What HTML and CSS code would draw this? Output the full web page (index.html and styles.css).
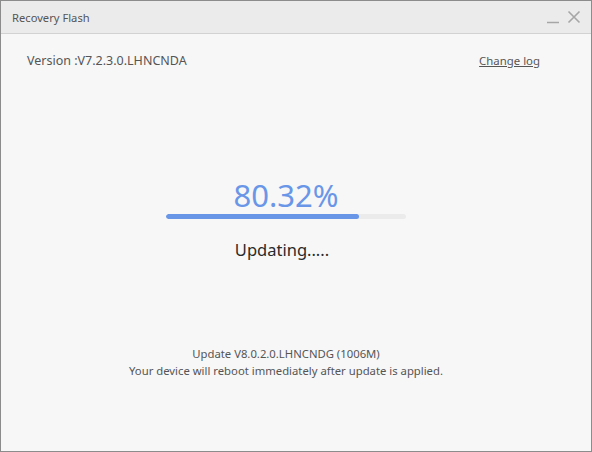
FILE: index.html
```html
<!DOCTYPE html>
<html>
<head>
<meta charset="utf-8">
<link rel="stylesheet" href="styles.css">
</head>
<body>
<div class="window">
  <div class="titlebar">
    <span class="title">Recovery Flash</span>
    <div class="controls">
      <svg class="ctl" width="14" height="14" viewBox="0 0 14 14"><path d="M1 12.5H13" stroke="#a6a6a6" stroke-width="1.5"/></svg>
      <svg class="ctl" width="14" height="14" viewBox="0 0 14 14"><path d="M1.5 1.5L12.5 12.5M12.5 1.5L1.5 12.5" stroke="#a6a6a6" stroke-width="1.6"/></svg>
    </div>
  </div>
  <div class="content">
    <div class="topline">
      <span class="version">Version :V7.2.3.0.LHNCNDA</span>
      <span class="changelog">Change log</span>
    </div>
    <div class="progress-area">
      <div class="percent">80.32%</div>
      <div class="track"><div class="fill" style="width:80.32%"></div></div>
      <div class="status">Updating.....</div>
    </div>
    <div class="info">
      <div>Update V8.0.2.0.LHNCNDG (1006M)</div>
      <div>Your device will reboot immediately after update is applied.</div>
    </div>
  </div>
</div>
</body>
</html>
```
FILE: styles.css
```css
html, body { margin: 0; padding: 0; }
body {
  width: 592px; height: 452px;
  font-family: "Noto Sans", "Open Sans", sans-serif;
  background: #f7f7f7;
}
.window {
  box-sizing: border-box;
  width: 592px; height: 452px;
  border: 1px solid #8c8c8c;
  background: #f7f7f7;
  display: flex; flex-direction: column;
}
.titlebar {
  height: 32px;
  background: #ebebeb;
  border-bottom: 1px solid #d2d2d2;
  display: flex; align-items: center; justify-content: space-between;
  padding: 0 10px 0 11px;
}
.title { font-size: 11.2px; color: #555; }
.controls { display: flex; gap: 7px; align-items: center; }
.ctl { display: block; }
.content { flex: 1; display: flex; flex-direction: column; }
.topline {
  display: flex; justify-content: space-between; align-items: baseline;
  padding: 18px 51px 0 26px;
  color: #555;
  line-height: 17px;
}
.version { font-size: 12.5px; }
.changelog { text-decoration: underline; color: #555; font-size: 11.4px; }
.progress-area {
  display: flex; flex-direction: column; align-items: center;
  margin-top: 108px;
  padding-right: 20px;
}
.percent { font-size: 31px; color: #6a96e8; line-height: 36px; }
.track {
  width: 240px; height: 5px; border-radius: 3px;
  background: #ebebeb; margin-top: 1px;
  overflow: hidden;
}
.fill { height: 100%; background: #6a96e8; border-radius: 3px; }
.status { font-size: 16.5px; color: #2a2a2a; margin-top: 19px; line-height: 24px; margin-left: -8px; }
.info {
  margin-top: 83px;
  padding-right: 20px;
  text-align: center; font-size: 11.3px; color: #555; line-height: 17px;
}
```
